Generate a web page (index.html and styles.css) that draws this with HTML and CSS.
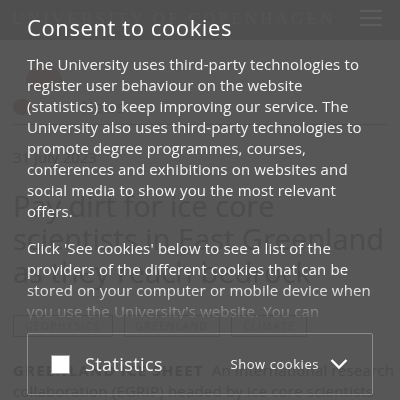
FILE: index.html
```html
<!DOCTYPE html>
<html lang="en">
<head>
<meta charset="utf-8">
<link rel="stylesheet" href="styles.css">
</head>
<body>
<div class="page">
  <header class="site-header">
    <span class="wordmark">UNIVERSITY OF COPENHAGEN</span>
    <span class="burger"><i></i><i></i><i></i></span>
  </header>
  <div class="crumbs">
    <span class="seal"></span>
    <div class="crumb-row"><span class="dot"></span><span class="crumb">News</span></div>
  </div>
  <main class="article">
    <p class="date">31 July 2023</p>
    <h1 class="headline">Pay dirt for ice core<br>scientists in East Greenland<br>as they reach bedrock</h1>
    <div class="tags"><span class="tag">Geophysics</span><span class="tag">Greenland</span><span class="tag">Climate</span></div>
    <p class="lead"><b>GREENLAND ICE SHEET</b> An international research collaboration (EGRIP) headed by ice core scientists</p>
  </main>
</div>

<div class="consent">
  <h2 class="consent-title">Consent to cookies</h2>
  <div class="consent-body">
    <p>The University uses third-party technologies to register user behaviour on the website (statistics) to keep improving our service. The University also uses third-party technologies to promote degree programmes, courses, conferences and exhibitions on websites and social media to show you the most relevant offers.</p>
    <p>Click 'See cookies' below to see a list of the providers of the different cookies that can be stored on your computer or mobile device when you use the University's website. You can</p>
  </div>
  <div class="option">
    <span class="check"></span>
    <span class="option-label">Statistics</span>
    <span class="show">Show cookies</span>
    <svg class="chev" width="18" height="12" viewBox="0 0 18 12"><path d="M1.5 2 L9 9.5 L16.5 2" fill="none" stroke="#fff" stroke-width="2.4"/></svg>
  </div>
</div>
</body>
</html>
```
FILE: styles.css
```css
html, body { margin: 0; padding: 0; }
body {
  background: #575757;
  font-family: "Open Sans", "Noto Sans", sans-serif;
  width: 400px; height: 400px; overflow: hidden;
}
.page { color: #4b4b4b; }
.site-header {
  height: 40px; background: #4f4f4f;
  display: flex; align-items: center; justify-content: space-between;
  padding: 0 18px 0 12px;
}
.wordmark {
  font-family: "Liberation Serif", serif; font-size: 17px; letter-spacing: 3.2px;
  color: #555; margin-top: -3px;
}
.burger { display: flex; flex-direction: column; gap: 5px; width: 22px; margin-top: -5px; }
.burger i { display: block; height: 2px; background: #5c5c5c; }
.crumbs { position: relative; height: 84px; margin: 0 13px; border-bottom: 1px solid #4d4d4d; }
.seal { position: absolute; left: 13px; top: 26px; width: 36px; height: 26px; border-radius: 50%; background: #545050; }
.crumb-row { position: absolute; left: 0; top: 55px; display: flex; align-items: center; gap: 50px; }
.dot { width: 18px; height: 16px; border-radius: 50%; background: #524e4e; }
.crumb { font-size: 17px; color: #4d4d4d; }
.article { padding: 0 13px; }
.date { margin: 22px 0 0; font-size: 15px; }
.headline { margin: 22px 0 0; font-size: 29px; line-height: 33px; font-weight: 400; color: #4c4c4c; white-space: nowrap; }
.tags { display: flex; gap: 11px; margin-top: 27px; }
.tag { border: 1px solid #4e4e4e; padding: 3px 11px; font-size: 10px; letter-spacing: 1.6px; text-transform: uppercase; color: #515151; }
.lead { margin: 23px 0 0; font-size: 15px; line-height: 21px; letter-spacing: 0.2px; width: 392px; }
.lead b { letter-spacing: 1.2px; margin-right: 4px; }

.consent {
  position: fixed; inset: 0;
  padding: 0 27px;
  color: #f2f2f2;
}
.consent-title {
  margin: 12px 0 0; font-size: 22px; line-height: 30px; font-weight: 400; color: #fff; letter-spacing: 0.6px;
}
.consent-body {
  margin-top: 12px; height: 265px; overflow: hidden;
  font-size: 15px; line-height: 21px; letter-spacing: 0.15px;
  -webkit-mask-image: linear-gradient(to bottom, #000 233px, rgba(0,0,0,0.15) 262px);
  mask-image: linear-gradient(to bottom, #000 233px, rgba(0,0,0,0.15) 262px);
}
.consent-body p { margin: 0 0 16px; }
.option {
  margin-top: 14px; height: 62px; box-sizing: border-box;
  border: 1px solid #8c8c8c; border-radius: 2px;
  display: flex; align-items: center; padding: 0 24px 0 23px;
}
.check { width: 17px; height: 17px; background: #fff; border: 1px solid #999; margin-right: 15px; }
.option-label { font-size: 18px; letter-spacing: 0.4px; flex: 1; }
.show { font-size: 13px; letter-spacing: 0.55px; margin-right: 11px; }
.chev { display: block; }
```
